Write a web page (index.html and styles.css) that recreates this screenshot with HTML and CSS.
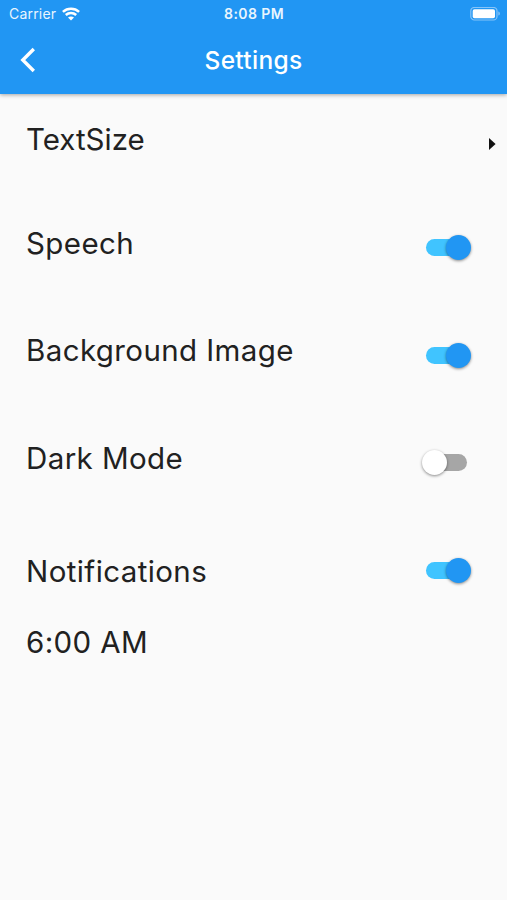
FILE: index.html
```html
<!DOCTYPE html>
<html lang="en">

<head>
    <meta charset="UTF-8">
    <meta name="viewport" content="width=device-width, initial-scale=1.0">
    <title>Settings</title>
    <link rel="stylesheet" href="styles.css">
</head>

<body>
    <header class="header">
        <div class="status-bar">
            <div class="carrier">
                <span>Carrier</span>
                <svg class="wifi" width="18" height="14" viewBox="0 0 18 14">
                    <path d="M.9 4.8C5.5 .6 12.5 .6 17.1 4.8" />
                    <path d="M3.8 8C6.8 5.2 11.2 5.2 14.2 8" />
                    <path class="wifi-dot" d="M9 13.6L6 10.6C7.7 9.1 10.3 9.1 12 10.6Z" />
                </svg>
            </div>
            <span class="clock">8:08 PM</span>
            <svg class="battery" width="31" height="14" viewBox="0 0 31 14">
                <rect class="battery-case" x=".8" y=".4" width="26.2" height="12.6" rx="3.6" />
                <rect class="battery-level" x="2.7" y="2.2" width="22.3" height="9" rx="1.8" />
                <path class="battery-tip" d="M28.3 4.4C30.4 5 30.4 8 28.3 8.6Z" />
            </svg>
        </div>
        <nav class="nav-bar">
            <svg class="back" width="16" height="26" viewBox="0 0 16 26">
                <path d="M13.8 2L2.8 13L13.8 24" />
            </svg>
            <h1>Settings</h1>
        </nav>
    </header>

    <main class="settings">
        <div class="row row-first">
            <span class="label">TextSize</span>
            <svg class="arrow" width="7" height="12" viewBox="0 0 7 12">
                <path d="M0 0L6.6 6L0 12Z" />
            </svg>
        </div>
        <div class="row">
            <span class="label">Speech</span>
            <span class="switch on"></span>
        </div>
        <div class="row">
            <span class="label">Background Image</span>
            <span class="switch on"></span>
        </div>
        <div class="row">
            <span class="label">Dark Mode</span>
            <span class="switch"></span>
        </div>
        <div class="row row-notifications">
            <span class="label">Notifications</span>
            <span class="switch on"></span>
        </div>
        <div class="time">6:00 AM</div>
    </main>
</body>

</html>
```
FILE: styles.css
```css
body {
    font-family: Inter, "Liberation Sans", sans-serif;
    margin: 0;
    min-height: 900px;
    background-color: #fafafa;
    color: #212121;
}

.header {
    height: 94px;
    background-color: #2196f3;
    color: #fff;
    box-shadow: 0 1px 4px rgba(0, 0, 0, 0.35);
}

.status-bar {
    display: grid;
    grid-template-columns: 1fr auto 1fr;
    align-items: center;
    height: 27px;
    padding: 0 6px 0 9px;
    font-size: 14px;
    color: #e9f5fe;
}

.carrier {
    display: flex;
    align-items: center;
    gap: 6px;
    letter-spacing: 0.2px;
}

.wifi {
    fill: none;
    stroke: #fff;
    stroke-width: 2.5;
}

.wifi .wifi-dot {
    fill: #fff;
    stroke: none;
}

.clock {
    font-weight: 600;
    font-size: 14px;
    letter-spacing: 0.4px;
    margin-right: 2px;
}

.battery {
    justify-self: end;
}

.battery-case {
    fill: none;
    stroke: #86c4f8;
    stroke-width: 1.2;
}

.battery-level {
    fill: #fff;
}

.battery-tip {
    fill: #86c4f8;
}

.nav-bar {
    display: grid;
    grid-template-columns: 1fr auto 1fr;
    align-items: center;
    height: 65px;
    padding: 0 20px;
}

.back {
    fill: none;
    stroke: #fff;
    stroke-width: 3.4;
}

h1 {
    margin: 0;
    font-size: 24.5px;
    font-weight: 500;
    letter-spacing: 0.3px;
}

.row {
    display: flex;
    align-items: center;
    justify-content: space-between;
    height: 107.5px;
    padding: 0 40px 0 26px;
}

.row-first {
    height: 100px;
    padding-right: 11px;
}

.label,
.time {
    font-size: 29.5px;
    line-height: 36px;
    letter-spacing: 0.4px;
}

.label {
    padding-bottom: 10px;
}

.row-first .label {
    padding-bottom: 11px;
    letter-spacing: 0;
}

.row-notifications .label {
    padding: 1px 0 0;
}

.time {
    padding-left: 26px;
}

.arrow {
    fill: #111;
}

.switch {
    position: relative;
    width: 41px;
    height: 17px;
    border-radius: 9px;
    background-color: #a6a6a6;
}

.switch::after {
    content: "";
    position: absolute;
    top: -4px;
    left: -4px;
    width: 25px;
    height: 25px;
    border-radius: 50%;
    background-color: #fff;
    box-shadow: 0 1px 3px rgba(0, 0, 0, 0.45);
}

.switch.on {
    background-color: #40c4ff;
}

.switch.on::after {
    left: 20px;
    background-color: #2196f3;
}
```
